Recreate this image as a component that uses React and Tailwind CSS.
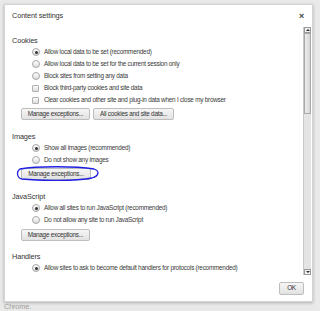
import React from 'react';

const Radio = ({ checked, label }) => (
  <div className="flex items-center h-[12px] pl-[20px]">
    <span className="w-[8px] h-[8px] rounded-full border border-[#a6a6a6] bg-gradient-to-b from-[#ffffff] to-[#dcdcdc] flex items-center justify-center shrink-0">
      {checked && <span className="w-[3px] h-[3px] rounded-full bg-[#333]" />}
    </span>
    <span className="ml-[4px] whitespace-nowrap">{label}</span>
  </div>
);

const Check = ({ label }) => (
  <div className="flex items-center h-[12px] pl-[20px]">
    <span className="w-[7px] h-[7px] rounded-[1px] border border-[#b0b0b0] bg-gradient-to-b from-[#fafafa] to-[#dedede] shrink-0" />
    <span className="ml-[5px] whitespace-nowrap">{label}</span>
  </div>
);

const Btn = ({ children, className = '' }) => (
  <button className={`h-[12px] px-[4px] border border-[#bdbdbd] rounded-[2px] bg-gradient-to-b from-[#f6f6f6] to-[#e2e2e2] text-[#333] leading-none whitespace-nowrap ${className}`}>
    {children}
  </button>
);

const Heading = ({ children, className = '' }) => (
  <div className={`h-[10px] flex items-center text-[7.3px] tracking-[-0.1px] text-[#333] ${className}`}>{children}</div>
);

export default function App() {
  return (
    <div
      className="w-[320px] h-[311px] bg-[#e9e9e9] overflow-hidden pt-[4px] pl-[4px] text-[6.4px] tracking-[-0.25px] text-[#3a3a3a]"
      style={{ fontFamily: '"Liberation Sans", Arial, sans-serif' }}
    >
      <div className="w-[309px] h-[298px] bg-white border border-[#d4d4d4] shadow-[0_1px_3px_rgba(0,0,0,0.25)] flex flex-col">
        {/* header */}
        <div className="h-[22px] flex items-center justify-between pl-[7px] pr-[8px] shrink-0">
          <span className="text-[7.3px] tracking-[-0.1px] text-[#333]">Content settings</span>
          <span className="text-[9px] font-bold text-[#444] leading-none">×</span>
        </div>

        {/* body */}
        <div className="flex h-[248px] shrink-0">
          <div className="flex-1 overflow-hidden pl-[7px] pt-[9px] relative">
            <Heading>Cookies</Heading>
            <Radio checked label="Allow local data to be set (recommended)" />
            <Radio label="Allow local data to be set for the current session only" />
            <Radio label="Block sites from setting any data" />
            <Check label="Block third-party cookies and site data" />
            <Check label="Clear cookies and other site and plug-in data when I close my browser" />
            <div className="flex gap-[3px] pl-[9px] mt-[2px]">
              <Btn className="w-[69px]">Manage exceptions...</Btn>
              <Btn className="w-[81px]">All cookies and site data...</Btn>
            </div>

            <Heading className="mt-[12px]">Images</Heading>
            <Radio checked label="Show all images (recommended)" />
            <Radio label="Do not show any images" />
            <div className="flex pl-[9px] mt-[2px] relative">
              <Btn className="w-[70px]">Manage exceptions...</Btn>
              <svg className="absolute left-[4px] top-[-3px]" width="84" height="17" viewBox="0 0 84 17">
                <path
                  d="M4 4 C 20 1, 60 1, 78 4 C 84 6, 83 11, 76 13 C 60 16, 25 16, 6 14 C 1 13, 0 7, 4 4 Z"
                  fill="none"
                  stroke="#1f1fe0"
                  strokeWidth="1.3"
                />
              </svg>
            </div>

            <Heading className="mt-[12px]">JavaScript</Heading>
            <Radio checked label="Allow all sites to run JavaScript (recommended)" />
            <Radio label="Do not allow any site to run JavaScript" />
            <div className="flex pl-[9px] mt-[3px]">
              <Btn className="w-[69px]">Manage exceptions...</Btn>
            </div>

            <Heading className="mt-[11px]">Handlers</Heading>
            <Radio checked label="Allow sites to ask to become default handlers for protocols (recommended)" />
          </div>

          {/* scrollbar */}
          <div className="w-[8px] mr-[1px] flex flex-col border-l border-[#c8c8c8] bg-[#e4e4e4]">
            <div className="h-[6px] border border-[#9a9a9a] bg-[#f0f0f0] flex items-center justify-center">
              <span className="w-0 h-0 border-l-[2px] border-r-[2px] border-b-[2px] border-l-transparent border-r-transparent border-b-[#333]" />
            </div>
            <div className="h-[81px] border border-[#a8a8a8] bg-gradient-to-r from-[#ececec] to-[#d6d6d6]" />
            <div className="flex-1" />
            <div className="h-[6px] border border-[#9a9a9a] bg-[#f0f0f0] flex items-center justify-center">
              <span className="w-0 h-0 border-l-[2px] border-r-[2px] border-t-[2px] border-l-transparent border-r-transparent border-t-[#333]" />
            </div>
          </div>
        </div>

        {/* footer */}
        <div className="flex-1 flex items-center justify-end pr-[8px]">
          <Btn className="w-[25px] h-[13px] px-0">OK</Btn>
        </div>
      </div>
      <div className="text-[7.5px] leading-[8px] text-[#a0a0a0] mt-[1px]">Chrome.</div>
    </div>
  );
}
